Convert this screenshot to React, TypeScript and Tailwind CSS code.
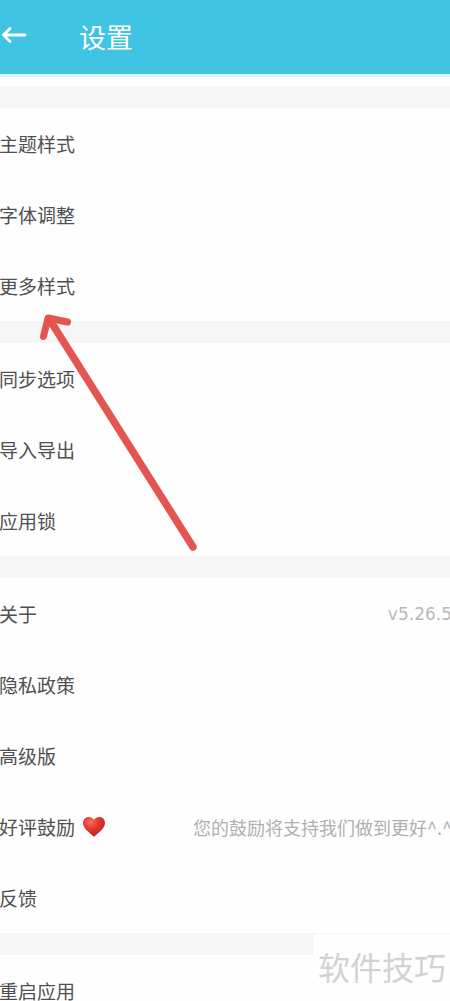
type Item = {
  label: string
  version?: string
  hint?: string
  heart?: boolean
}

const groups: Item[][] = [
  [{ label: '主题样式' }, { label: '字体调整' }, { label: '更多样式' }],
  [{ label: '同步选项' }, { label: '导入导出' }, { label: '应用锁' }],
  [
    { label: '关于', version: 'v5.26.5' },
    { label: '隐私政策' },
    { label: '高级版' },
    { label: '好评鼓励', heart: true, hint: '您的鼓励将支持我们做到更好^.^' },
    { label: '反馈' },
  ],
  [{ label: '重启应用' }],
]

const Heart = () => (
  <svg width="24" height="22" viewBox="0 0 24 22" aria-hidden="true">
    <defs>
      <radialGradient id="heart" cx="0.35" cy="0.25" r="0.8">
        <stop offset="0" stopColor="#f8705f" />
        <stop offset="0.4" stopColor="#e63c32" />
        <stop offset="1" stopColor="#b81f1a" />
      </radialGradient>
    </defs>
    <path
      d="M12 3.800C10.600 1.800 8.700 1 6.700 1 3.400 1 1 3.600 1 7.100c0 5.200 6.600 10 11 13.700 4.400-3.700 11-8.500 11-13.700C23 3.600 20.600 1 17.300 1c-2 0-3.900.8-5.300 2.800z"
      fill="url(#heart)"
    />
  </svg>
)

const Row = ({ item }: { item: Item }) => (
  <li>
    <button
      type="button"
      className="flex h-[71px] w-full items-center justify-between whitespace-nowrap text-left"
    >
      <span className="flex items-center gap-[7px] text-[19px] leading-6 text-[#505050]">
        {item.label}
        {item.heart && <Heart />}
      </span>
      {item.version && (
        <span className="font-['DejaVu_Sans',sans-serif] text-[17px] leading-6 text-[#b8b8b8]">{item.version}</span>
      )}
      {item.hint && <span className="text-lg leading-6 text-[#b0b0b0]">{item.hint}</span>}
    </button>
  </li>
)

const App = () => {
  return (
    <div className="relative h-screen overflow-hidden bg-[#fefefe] font-['Noto_Sans_CJK_SC',sans-serif]">
      {/* Header */}
      <header className="flex h-[77px] items-center gap-[52px] border-b-3 border-[#dcf3fa] bg-[#40c4e4] pb-0.5 text-white">
        <button type="button" aria-label="返回">
          <svg width="27" height="20" viewBox="0 0 27 20" fill="none" className="block">
            <path
              d="M25 9H3.500M10 2.500 3.500 9l6.500 6.500"
              stroke="currentColor"
              strokeWidth="2.8"
              strokeLinecap="round"
              strokeLinejoin="round"
            />
          </svg>
        </button>
        <h1 className="text-[27px] leading-none">设置</h1>
      </header>

      {/* Settings list */}
      <main className="pt-[9px]">
        {groups.map((items) => (
          <section key={items[0].label} className="border-t-22 border-[#f6f6f6]">
            <ul className="-mr-0.5 -ml-px">
              {items.map((item) => (
                <Row key={item.label} item={item} />
              ))}
            </ul>
          </section>
        ))}
      </main>

      {/* Pointer arrow over the list */}
      <svg
        className="pointer-events-none absolute left-9 top-[308px]"
        width="166"
        height="248"
        viewBox="36 308 166 248"
        fill="none"
        stroke="#e4554f"
        strokeLinecap="round"
        strokeLinejoin="round"
        aria-hidden="true"
      >
        <path d="M53 325 193 547" strokeWidth="7.5" />
        <path d="M43.500 336.500 48 318 67.500 322" strokeWidth="7" />
        <path d="M48 318 47.500 327 57 321z" fill="#e4554f" strokeWidth="2" />
      </svg>

      {/* Watermark */}
      <div className="absolute bottom-0 right-0 flex h-[67px] items-center bg-[#fefefe] px-1 pb-1 text-[32px] leading-none text-[#d2d2d2]">
        软件技巧
      </div>
    </div>
  )
}

export default App
